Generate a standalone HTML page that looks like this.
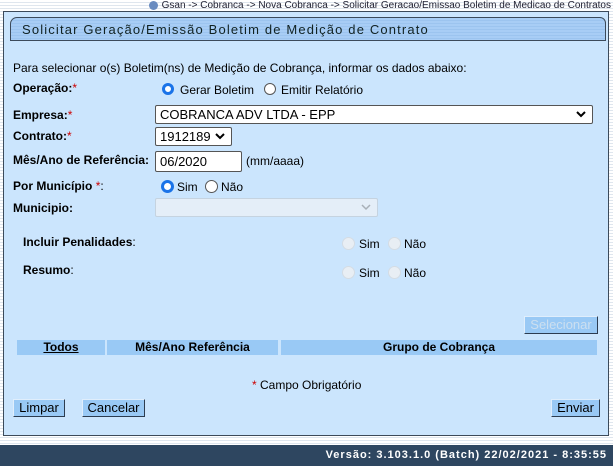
<!DOCTYPE html><html><head><meta charset="utf-8"><style>
body{margin:0;width:613px;height:466px;position:relative;overflow:hidden;font-family:"Liberation Sans",Arial,sans-serif;font-size:12px;color:#000;
background:repeating-linear-gradient(#fff 0 2px,#dfe6ee 2px 3px);}
.a{position:absolute;white-space:nowrap}
#panel{position:absolute;left:3px;top:11px;width:604px;height:423px;background:#cbe5fd;border:1px solid #3c4a5a}
#title{position:absolute;left:10px;top:17px;width:594px;height:22px;border:1px solid #3c4a5a;border-radius:7px 6px 0 0;
background:repeating-linear-gradient(#a8cdf5 0 2px,#9cc4ef 2px 3px);}
#title span{position:absolute;left:11px;top:4px;font-size:13px;letter-spacing:1.15px;color:#122}
b{font-weight:bold}
.r{color:#c00}
.rad{position:absolute;width:11px;height:11px;border-radius:50%;border:1px solid #555;background:#fff;box-sizing:border-box}
.rad.on{border:3px solid #1a73e8;background:#fff}
.rad.dis{border-color:#d4dce4;background:#e8eef4}
.sel{position:absolute;border:1px solid #555;background:#fff;border-radius:2px;box-sizing:border-box;font-size:13px;padding:1px 4px}
.sel svg{position:absolute;right:6px;top:5px}
.btn{position:absolute;height:18px;background:#99c9f5;border:1px solid #2c3c50;border-color:#e0eefc #2c3c50 #2c3c50 #e0eefc;box-sizing:border-box;font-size:13px;text-align:center;line-height:16px}
.th{position:absolute;top:340px;height:15px;background:#99c9f5;text-align:center;font-weight:bold;line-height:15px}
</style></head><body>
<div class="a" style="right:2px;top:0;font-size:10px;color:#223">Gsan -&gt; Cobranca -&gt; Nova Cobranca -&gt; Solicitar Geracao/Emissao Boletim de Medicao de Contratos</div>
<div class="a" style="left:149px;top:1px;width:9px;height:9px;border-radius:50%;background:#6a8cc0"></div>
<div id="panel"></div>
<div id="title"><span>Solicitar Geração/Emissão Boletim de Medição de Contrato</span></div>
<div class="a" style="left:13px;top:61px">Para selecionar o(s) Boletim(ns) de Medição de Cobrança, informar os dados abaixo:</div>
<div class="a" style="left:13px;top:81px"><b>Operação:</b><span class="r">*</span></div>
<div class="rad on" style="left:162px;top:83px;width:12px;height:12px"></div><div class="a" style="left:180px;top:83px">Gerar Boletim</div>
<div class="rad" style="left:264px;top:83px;width:12px;height:12px"></div><div class="a" style="left:281px;top:83px">Emitir Relatório</div>
<div class="a" style="left:13px;top:108px"><b>Empresa:</b><span class="r">*</span></div>
<div class="sel" style="left:155px;top:105px;width:438px;height:19px">COBRANCA ADV LTDA - EPP<svg width="10" height="7"><path d="M1 1l4 4 4-4" stroke="#000" stroke-width="2" fill="none"/></svg></div>
<div class="a" style="left:13px;top:129px"><b>Contrato:</b><span class="r">*</span></div>
<div class="sel" style="left:155px;top:127px;width:77px;height:19px">1912189<svg width="10" height="7"><path d="M1 1l4 4 4-4" stroke="#000" stroke-width="2" fill="none"/></svg></div>
<div class="a" style="left:13px;top:153px"><b>Mês/Ano de Referência:</b></div>
<div class="sel" style="left:155px;top:151px;width:87px;height:21px;padding-top:2px">06/2020</div>
<div class="a" style="left:246px;top:154px">(mm/aaaa)</div>
<div class="a" style="left:13px;top:179px"><b>Por Município</b> <span class="r">*</span>:</div>
<div class="rad on" style="left:161px;top:180px;width:13px;height:13px"></div><div class="a" style="left:177px;top:180px">Sim</div>
<div class="rad" style="left:205px;top:180px;width:13px;height:13px"></div><div class="a" style="left:221px;top:180px">Não</div>
<div class="a" style="left:13px;top:201px"><b>Municipio:</b></div>
<div class="sel" style="left:155px;top:198px;width:223px;height:19px;border-color:#c5d3e0;background:#e4eef8"><svg width="10" height="7"><path d="M1 1l4 4 4-4" stroke="#a8b0b8" stroke-width="1.5" fill="none"/></svg></div>
<div class="a" style="left:23px;top:235px"><b>Incluir Penalidades</b>:</div>
<div class="rad dis" style="left:342px;top:237px;width:13px;height:13px"></div><div class="a" style="left:359px;top:237px">Sim</div>
<div class="rad dis" style="left:388px;top:237px;width:13px;height:13px"></div><div class="a" style="left:404px;top:237px">Não</div>
<div class="a" style="left:23px;top:263px"><b>Resumo</b>:</div>
<div class="rad dis" style="left:342px;top:266px;width:13px;height:13px"></div><div class="a" style="left:359px;top:266px">Sim</div>
<div class="rad dis" style="left:388px;top:266px;width:13px;height:13px"></div><div class="a" style="left:404px;top:266px">Não</div>
<div class="btn" style="left:524px;top:316px;width:74px;color:#ccdff0">Selecionar</div>
<div class="th" style="left:17px;width:88px"><u>Todos</u></div>
<div class="th" style="left:107px;width:171px">Mês/Ano Referência</div>
<div class="th" style="left:281px;width:316px">Grupo de Cobrança</div>
<div class="a" style="left:252px;top:378px"><span class="r">*</span> Campo Obrigatório</div>
<div class="btn" style="left:13px;top:399px;width:52px">Limpar</div>
<div class="btn" style="left:82px;top:399px;width:63px">Cancelar</div>
<div class="btn" style="left:551px;top:399px;width:49px">Enviar</div>
<div class="a" style="left:0;top:445px;width:613px;height:21px;background:#2e4660"></div>
<div class="a" style="right:6px;top:449px;color:#fff;font-weight:bold;font-size:11px;letter-spacing:1px">Versão: 3.103.1.0 (Batch) 22/02/2021 - 8:35:55</div>
</body></html>
